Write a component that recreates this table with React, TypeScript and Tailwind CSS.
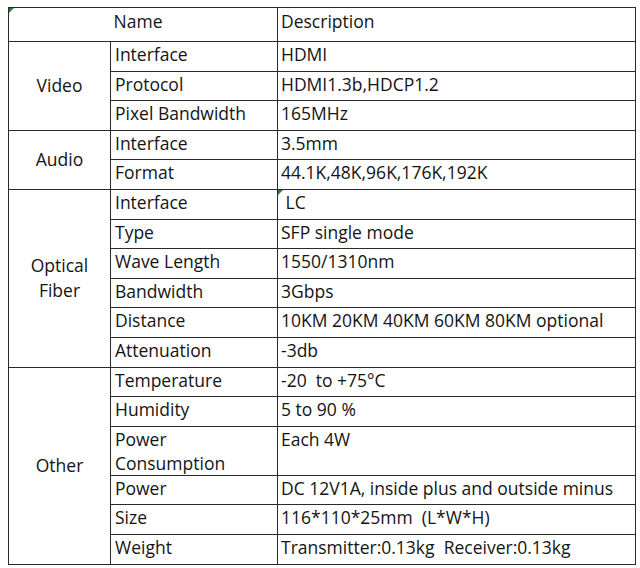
const groups: { name: string[]; rows: [string[], string][] }[] = [
  {
    name: ["Video"],
    rows: [
      [["Interface"], "HDMI"],
      [["Protocol"], "HDMI1.3b,HDCP1.2"],
      [["Pixel Bandwidth"], "165MHz"],
    ],
  },
  {
    name: ["Audio"],
    rows: [
      [["Interface"], "3.5mm"],
      [["Format"], "44.1K,48K,96K,176K,192K"],
    ],
  },
  {
    name: ["Optical", "Fiber"],
    rows: [
      [["Interface"], "\u00a0LC"],
      [["Type"], "SFP single mode"],
      [["Wave Length"], "1550/1310nm"],
      [["Bandwidth"], "3Gbps"],
      [["Distance"], "10KM 20KM 40KM 60KM 80KM optional"],
      [["Attenuation"], "-3db"],
    ],
  },
  {
    name: ["Other"],
    rows: [
      [["Temperature"], "-20\u00a0 to +75\u00b0C"],
      [["Humidity"], "5 to 90 %"],
      [["Power", "Consumption"], "Each 4W"],
      [["Power"], "DC 12V1A, inside plus and outside minus"],
      [["Size"], "116*110*25mm\u00a0 (L*W*H)"],
      [["Weight"], "Transmitter:0.13kg\u00a0 Receiver:0.13kg"],
    ],
  },
];

// little green corner marks left over from the spreadsheet
const Mark = () => (
  <span className="absolute left-0 top-0 w-0 h-0 border-t-[5px] border-r-[5px] border-t-[#2f7a3a] border-r-transparent" />
);

export default function App() {
  return (
    <div className="w-[640px] h-[568px] bg-white pl-[8px] pt-[7px] font-['Open_Sans',sans-serif] text-[17.5px] text-[#141414]">
      <table className="border-collapse border-[1.5px] border-[#2a2a2a] table-fixed w-[627px]">
        <colgroup>
          <col className="w-[102px]" />
          <col className="w-[167px]" />
          <col className="w-[358px]" />
        </colgroup>
        <tbody>
          <tr className="h-[34px]">
            <td colSpan={2} className="relative border border-[#2a2a2a] text-center align-top pt-[1px] leading-[24px] pr-[10px]">
              <Mark />
              Name
            </td>
            <td className="border border-[#2a2a2a] align-top pt-[1px] pl-[3px] leading-[24px]">Description</td>
          </tr>
          {groups.map((g, gi) =>
            g.rows.map(([label, value], i) => (
              <tr key={g.name.join() + i} className={label.length > 1 ? "h-[49px]" : "h-[29.6px]"}>
                {i === 0 && (
                  <td rowSpan={g.rows.length} className="border border-[#2a2a2a] text-center align-middle leading-[25px] p-0">
                    {g.name.map((n) => (
                      <div key={n}>{n}</div>
                    ))}
                  </td>
                )}
                <td className="border border-[#2a2a2a] align-top pl-[4px] p-0 leading-[24px]">
                  {label.map((l) => (
                    <div key={l}>{l}</div>
                  ))}
                </td>
                <td className="relative border border-[#2a2a2a] align-top pl-[3px] p-0 leading-[24px] whitespace-nowrap">
                  {gi === 2 && i === 0 && <Mark />}
                  {value}
                </td>
              </tr>
            ))
          )}
        </tbody>
      </table>
    </div>
  );
}
